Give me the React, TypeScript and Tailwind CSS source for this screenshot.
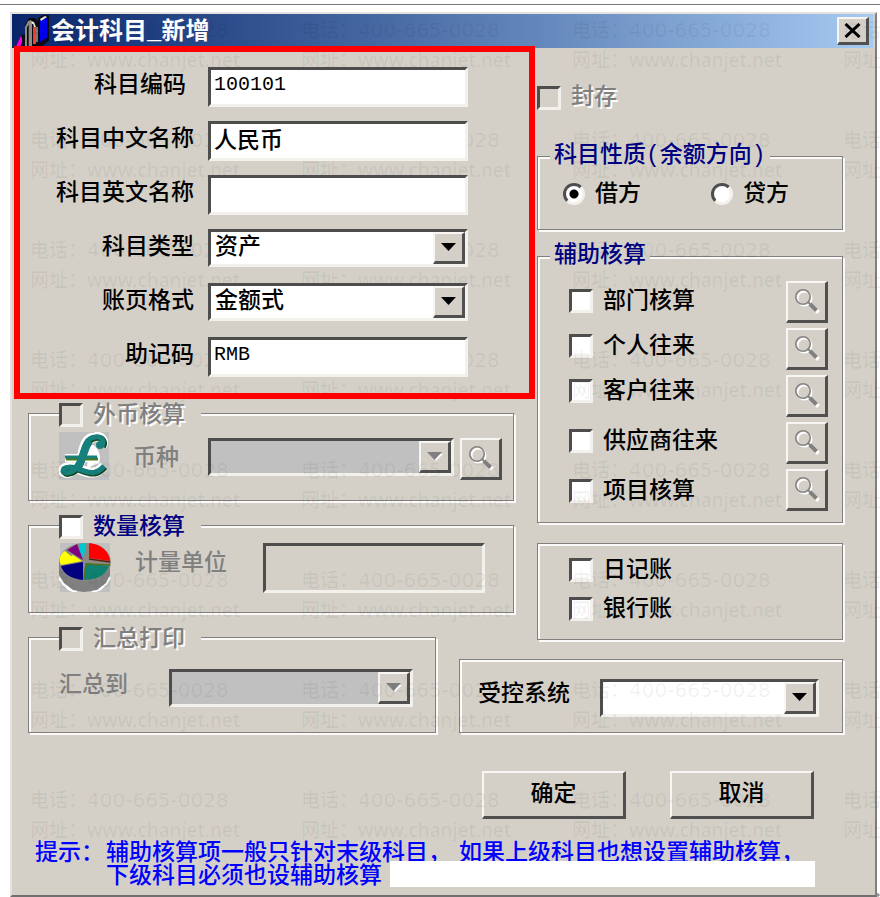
import { useState } from 'react';
import type { ReactNode } from 'react';
import clsx from 'clsx';

const sunken =
  'border-[3px] border-t-[#4d4d4d] border-l-[#4d4d4d] border-r-[#f3f1ec] border-b-[#f3f1ec]';
const raised =
  'border-t-2 border-l-2 border-r-[3px] border-b-[3px] border-t-[#f7f6f3] border-l-[#f7f6f3] border-r-[#505050] border-b-[#505050] bg-[#d4d0c8]';
const etched =
  'min-w-0 border border-[#808080] shadow-[2px_2px_0_#fbfaf8,inset_2px_2px_0_#fbfaf8]';
const embossed = 'text-[#808080] [text-shadow:2px_2px_0_#fbfaf8]';

function TickBox({ id, disabled }: { id: string; disabled?: boolean }) {
  const [on, setOn] = useState(false);
  return (
    <input
      id={id}
      type="checkbox"
      disabled={disabled}
      checked={on}
      onChange={(e) => setOn(e.target.checked)}
      className={clsx(
        'size-6 shrink-0 appearance-none checked:bg-[radial-gradient(#000_40%,transparent_45%)]',
        sunken,
        disabled ? 'bg-[#d4d0c8]' : 'bg-white'
      )}
    />
  );
}

function Combo({ id, value, disabled, className }: { id: string; value?: string; disabled?: boolean; className?: string }) {
  return (
    <div className={clsx('relative h-[38px] min-w-0', sunken, disabled ? 'bg-[#c0c0c0]' : 'bg-white', className)}>
      <select id={id} disabled={disabled} className="block h-full w-full appearance-none bg-transparent pl-1 leading-8 text-black outline-none">
        <option>{value || ''}</option>
      </select>
      <span className={clsx('pointer-events-none absolute top-0 right-0 flex h-full w-8 items-center justify-center', raised)}>
        <svg width="16" height="9" viewBox="0 0 16 9">
          {disabled && <path d="M2 2h14L9 9z" fill="#fff" />}
          <path d="M0 0h15L7.500 8z" fill={disabled ? '#808080' : '#000'} />
        </svg>
      </span>
    </div>
  );
}

function SearchButton({ label }: { label: string }) {
  return (
    <button type="button" aria-label={label} className={clsx('size-[42px] shrink-0', raised)}>
      <svg width="37" height="37" viewBox="0 0 37 37" fill="none">
        <circle cx="16.500" cy="15.500" r="7" stroke="#fff" strokeWidth="2" />
        <path d="M23 22l7.500 7.500" stroke="#fff" strokeWidth="4" />
        <circle cx="15" cy="14" r="7.200" stroke="#858585" strokeWidth="1.600" />
        <path d="M20 19l3 3" stroke="#858585" strokeWidth="2" />
        <path d="M22 21l6.500 6.500" stroke="#808080" strokeWidth="4" />
      </svg>
    </button>
  );
}

function Field({ id, label, children, wide }: { id: string; label: string; children: ReactNode; wide?: boolean }) {
  return (
    <div className="flex h-10">
      <label htmlFor={id} className={clsx('w-[188px] shrink-0 text-right leading-[38px]', wide ? 'pr-[22px]' : 'pr-[14px]')}>
        {label}
      </label>
      {children}
    </div>
  );
}

function TextBox({ id, value, latin }: { id: string; value: string; latin?: boolean }) {
  return (
    <input
      id={id}
      type="text"
      defaultValue={value}
      className={clsx('h-10 w-full min-w-0 bg-white pb-1.5 pl-[3px] text-black outline-none', sunken, latin && 'text-xl')}
    />
  );
}

function TickRow({ id, label, className }: { id: string; label: string; className: string }) {
  return (
    <div className={clsx('flex items-center gap-[10px]', className)}>
      <TickBox id={id} />
      <label htmlFor={id} className="pt-0.5">{label}</label>
    </div>
  );
}

function TickLegend({ id, label, disabled }: { id: string; label: string; disabled?: boolean }) {
  return (
    <legend className="ml-[30px] flex h-7 items-center gap-[10px] bg-[#d4d0c8] pt-1 pr-4">
      <TickBox id={id} disabled={disabled} />
      <label htmlFor={id} className={clsx('pt-0.5 leading-6', disabled ? embossed : 'text-[#000080]')}>
        {label}
      </label>
    </legend>
  );
}

function RadioItem({ id, label, checked }: { id: string; label: string; checked?: boolean }) {
  return (
    <div className="flex items-center gap-[10px]">
      <input
        id={id}
        name="direction"
        type="radio"
        defaultChecked={checked}
        className="size-[22px] shrink-0 appearance-none rounded-full border-[3px] border-t-[#4d4d4d] border-r-[#f3f1ec] border-b-[#f3f1ec] border-l-[#4d4d4d] bg-white checked:bg-[radial-gradient(#000_4px,#fff_5px)]"
      />
      <label htmlFor={id} className="pt-0.5">{label}</label>
    </div>
  );
}

function BooksIcon() {
  return (
    <svg width="33" height="32" viewBox="0 0 33 32">
      <path d="M0 30l6-10 3-1 0-9 4-7 6 0 3 3v-3l7-4 5 2v24l-9 7H0z" fill="#0a0a14" />
      <path d="M1 29l4-8 1 2v4l-2 5H0z" fill="#ff00e0" />
      <path d="M9 12l3-6 3-1 1 3v24h-3V10l-2 2v20H9z" fill="#8f8b84" />
      <path d="M12 10h1v22h-1z" fill="#333" />
      <path d="M15 6l3 1 2 5h-2l-1-3h-1z" fill="#e6e3dc" />
      <path d="M17 12h3v17h-3z" fill="#f04030" />
      <path d="M20 12h2v15h-2z" fill="#777" />
      <path d="M24 6l7-3v20l-7 4z" fill="#0000f0" />
      <path d="M24 4l5-3 2 1-6 4z" fill="#e4e4e4" />
    </svg>
  );
}

function PoundIcon() {
  const stem =
    'M43 14C46 8 42 4 36 5C22 7 26 24 19 34C15 40 7 43 4 39C4 34 14 34 22 38C32 42 38 42 45 34';
  return (
    <svg width="50" height="48" viewBox="0 0 50 48" className="shrink-0 bg-[#c0c0c0]" fill="none">
      <path d={stem} stroke="#fff" strokeWidth="10" />
      <path d="M30 11c9 3 13 12 10 20l-12 5z" fill="#fff" />
      <path d="M6 26h33" stroke="#fff" strokeWidth="8" />
      <g transform="translate(1 1)">
        <path d={stem} stroke="#164a24" strokeWidth="6" />
        <path d="M6 26h32" stroke="#4c7a18" strokeWidth="3" />
      </g>
      <path d={stem} stroke="#16807c" strokeWidth="5" />
      <path d="M31 9C24 15 25 28 18 36" stroke="#16807c" strokeWidth="8" />
      <circle cx="41" cy="13" r="4" fill="#16807c" />
      <path d="M6 25h32" stroke="#16807c" strokeWidth="3" />
    </svg>
  );
}

function PieIcon() {
  return (
    <svg width="52" height="49" viewBox="0 0 52 49" className="shrink-0">
      <path d="M1 0h50v49H1z" fill="#c0c0c0" />
      <path d="M0 34l4 6 6 6 8 3M51 34l-4 6-6 6-8 3" stroke="#fff" strokeWidth="3" fill="none" />
      <path d="M0 19v13l5 8 9 7 11 2 13-2 9-7 4-8V19z" fill="#808080" />
      <ellipse cx="26" cy="19" rx="26" ry="19" fill="#8a8a80" />
      <path d="M30 0c12 1 20 8 21 18L30 15z" fill="#f00" />
      <path d="M30 16l21 3" stroke="#602010" strokeWidth="1.500" />
      <path d="M20 1l6-1v9l-2 6L20 7z" fill="#00c8d0" />
      <path d="M18 1l6 16L8 7z" fill="#800080" />
      <path d="M6 8l6 5 2-1 9 6L2 22C-1 17 1 11 6 8z" fill="#ff0" />
      <path d="M2 23l22-4v18C13 36 4 31 2 23z" fill="#000080" />
      <path d="M27 20l23 3c-3 9-12 14-25 14z" fill="#108070" />
      <path d="M25 36l2-15 24 1" stroke="#507018" strokeWidth="1.500" fill="none" />
    </svg>
  );
}

function Watermark() {
  return (
    <div
      aria-hidden="true"
      className="pointer-events-none absolute inset-0 grid auto-rows-[110px] grid-cols-[repeat(4,271px)] overflow-hidden pt-[15px] pl-[30px] text-[19px] whitespace-nowrap text-black/6"
    >
      {Array.from({ length: 32 }, (_, i) => (
        <div key={i} className="font-['Noto_Sans','Noto_Sans_CJK_SC',sans-serif] leading-[30px]">
          <div className="flex">
            电话：<span className="font-['DejaVu_Sans',sans-serif] text-xl leading-[30px]">400-665-0028</span>
          </div>
          <div>网址：www.chanjet.net</div>
        </div>
      ))}
    </div>
  );
}

const assist = ['部门核算', '个人往来', '客户往来', '供应商往来', '项目核算'];

export default function App() {
  return (
    <div className="relative overflow-hidden bg-white pb-px font-['Liberation_Mono','Noto_Sans_CJK_SC',monospace] text-[23px] leading-6 font-medium text-black">
      <div className="mb-[7px] h-[5px] border-b border-[#77777c]" />

      <div className="mr-[3px] ml-[10px] border-2 border-t-[#e4e2dd] border-r-[#808080] border-b-[#707070] border-l-[#e4e2dd] bg-[#d4d0c8]">
        <header className="mr-0.5 flex h-[34px] items-center bg-linear-to-r from-[#0a246a] to-[#a6caf0] pr-1 pl-1">
          <BooksIcon />
          <h1 className="ml-0.5 flex-1 pt-1 text-2xl leading-8 font-bold text-white">会计科目_新增</h1>
          <button type="button" aria-label="关闭" className={clsx('flex h-7 w-8 items-center justify-center', raised)}>
            <svg width="17" height="15" viewBox="0 0 17 15">
              <path d="M1.500 1l14 13M15.500 1l-14 13" stroke="#000" strokeWidth="3" />
            </svg>
          </button>
        </header>

        <div className="flex gap-0.5 pr-8 pl-0.5">
          <div className="min-w-0 flex-1">
            <section className="relative z-10 -mt-0.5 flex h-[353px] flex-col gap-[14px] border-[6px] border-[#ff0000] pt-[15px] pr-[61px]">
              <Field id="code" label="科目编码" wide>
                <TextBox id="code" value="100101" latin />
              </Field>
              <Field id="nameCn" label="科目中文名称">
                <TextBox id="nameCn" value="人民币" />
              </Field>
              <Field id="nameEn" label="科目英文名称">
                <TextBox id="nameEn" value="" />
              </Field>
              <Field id="kind" label="科目类型">
                <Combo id="kind" value="资产" className="flex-1" />
              </Field>
              <Field id="format" label="账页格式">
                <Combo id="format" value="金额式" className="flex-1" />
              </Field>
              <Field id="memo" label="助记码">
                <TextBox id="memo" value="RMB" latin />
              </Field>
            </section>

            <div className="mr-[21px] ml-[14px] flex flex-col gap-[10px]">
              <fieldset className={clsx('h-[102px]', etched)}>
                <TickLegend id="foreign" label="外币核算" disabled />
                <div className="flex items-start pt-[5px] pr-[11px] pl-[30px]">
                  <PoundIcon />
                  <label htmlFor="currency" className="ml-6 w-[75px] leading-[54px] text-[#808080]">币种</label>
                  <Combo id="currency" disabled className="mt-1.5 mr-1.5 flex-1" />
                  <div className="mt-1.5 flex">
                    <SearchButton label="查找币种" />
                  </div>
                </div>
              </fieldset>

              <fieldset className={clsx('h-[102px]', etched)}>
                <TickLegend id="quantity" label="数量核算" />
                <div className="flex items-start pt-1 pr-7 pl-[30px]">
                  <PieIcon />
                  <label htmlFor="unit" className="ml-6 w-32 shrink-0 leading-[42px] text-[#808080]">计量单位</label>
                  <input id="unit" type="text" disabled className={clsx('h-[50px] w-full min-w-0 bg-[#d4d0c8]', sunken)} />
                </div>
              </fieldset>

              <fieldset className={clsx('h-[110px] w-[408px]', etched)}>
                <TickLegend id="sumPrint" label="汇总打印" disabled />
                <div className="flex items-start pt-[18px] pr-[22px] pl-[30px]">
                  <label htmlFor="sumTo" className="w-[110px] shrink-0 leading-[34px] text-[#808080]">汇总到</label>
                  <Combo id="sumTo" disabled className="flex-1" />
                </div>
              </fieldset>
            </div>
          </div>

          <div className="w-[306px] shrink-0 pt-[38px]">
            <div className="flex items-center gap-[10px]">
              <TickBox id="sealed" disabled />
              <label htmlFor="sealed" className={embossed}>封存</label>
            </div>

            <fieldset className={clsx('mt-[34px] h-[86px]', etched)}>
              <legend className="ml-3 bg-[#d4d0c8] px-1 text-[#000080]">科目性质(余额方向)</legend>
              <div className="flex gap-[70px] pt-[13px] pl-[25px]">
                <RadioItem id="debit" label="借方" checked />
                <RadioItem id="credit" label="贷方" />
              </div>
            </fieldset>

            <fieldset className={clsx('mt-[14px] h-[279px]', etched)}>
              <legend className="ml-3 bg-[#d4d0c8] px-1 text-[#000080]">辅助核算</legend>
              <div className="flex justify-between pt-[10px] pr-[14px] pl-[31px]">
                <div>
                  {assist.slice(0, 3).map((name) => (
                    <TickRow key={name} id={name} label={name} className="h-[45px]" />
                  ))}
                  <div className="mt-[3px]">
                    {assist.slice(3).map((name) => (
                      <TickRow key={name} id={name} label={name} className="h-[50px]" />
                    ))}
                  </div>
                </div>
                <div className="flex flex-col gap-[5px] pt-[3px]">
                  {assist.map((name) => (
                    <SearchButton key={name} label={`查找${name}`} />
                  ))}
                </div>
              </div>
            </fieldset>

            <div className={clsx('mt-5 h-[97px] pt-[6px] pl-[31px]', etched)}>
              <TickRow id="journal" label="日记账" className="h-[39px]" />
              <TickRow id="bank" label="银行账" className="h-[39px]" />
            </div>

            <div className={clsx('mt-[19px] -ml-[78px] flex h-[74px] pt-[19px] pr-[23px] pl-[18px]', etched)}>
              <label htmlFor="system" className="w-[122px] leading-8">受控系统</label>
              <Combo id="system" className="flex-1" />
            </div>
          </div>
        </div>

        <div className="mt-[38px] flex justify-end gap-11 pr-[61px]">
          <button type="button" className={clsx('h-12 w-36', raised)}>确定</button>
          <button type="button" className={clsx('h-12 w-36', raised)}>取消</button>
        </div>

        <div className="relative mt-6 flex h-[52px] pl-[23px] leading-[23px] whitespace-nowrap text-[#0000ff]">
          <span className="w-[71px]">提示：</span>
          <p>
            <span className="mr-2">辅助核算项一般只针对末级科目，</span>
            <span>如果上级科目也想设置辅助核算，</span>
            <br />
            下级科目必须也设辅助核算
          </p>
          <div className="absolute top-[18px] right-[60px] left-[378px] h-[26px] bg-white" />
        </div>
      </div>

      <svg width="4" height="6" viewBox="0 0 4 6" className="absolute right-0 bottom-0">
        <path d="M0 3h4M2 1v4" stroke="#777" />
      </svg>
      <Watermark />
    </div>
  );
}
